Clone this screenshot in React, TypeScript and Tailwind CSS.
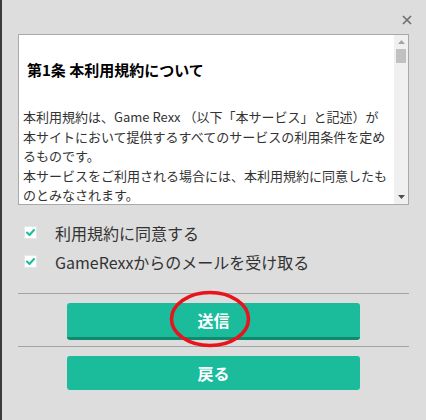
import React from "react";

function Check() {
  return (
    <div className="w-[13px] h-[13px] shrink-0 bg-white border border-[#e6e6e6] flex items-center justify-center">
      <svg width="11" height="11" viewBox="0 0 11 11">
        <path d="M2 5.5 L4.5 8 L9 3" fill="none" stroke="#1abc9c" strokeWidth="2" strokeLinecap="round" strokeLinejoin="round" />
      </svg>
    </div>
  );
}

export default function App() {
  return (
    <div
      className="relative w-[426px] h-[420px] bg-[#dddddd] flex overflow-hidden"
      style={{ fontFamily: '"Noto Sans CJK JP", "Noto Sans", sans-serif' }}
    >
      <div className="w-[2px] shrink-0 bg-[#3a3a3a]" />
      <div className="flex-1 flex flex-col pl-4 pr-[17px]">
        <div className="h-[34px] flex justify-end items-start">
          <svg className="mt-[15px] -mr-[3px]" width="10" height="10" viewBox="0 0 10 10">
            <path d="M1 1 L9 9 M9 1 L1 9" stroke="#707070" strokeWidth="1.7" />
          </svg>
        </div>

        <div className="h-[171px] border border-[#a9a9a9] bg-white flex">
          <div className="flex-1 overflow-hidden pl-[4px] pr-[2px]">
            <h4 className="pl-1 pt-[24px] text-[15px] font-bold leading-[22px] text-black whitespace-nowrap">
              第1条 本利用規約について
            </h4>
            <p className="mt-[26px] text-[13px] leading-[19.5px] text-[#333333] whitespace-nowrap">
              本利用規約は、Game Rexx （以下「本サービス」と記述）が
              <br />
              本サイトにおいて提供するすべてのサービスの利用条件を定め
              <br />
              るものです。
              <br />
              本サービスをご利用される場合には、本利用規約に同意したも
              <br />
              のとみなされます。
            </p>
          </div>
          <div className="w-[14px] shrink-0 bg-[#f0f0f0] flex flex-col items-center">
            <div className="h-[14px] flex items-center justify-center">
              <svg width="7" height="4" viewBox="0 0 7 4">
                <path d="M0 4 L3.5 0 L7 4 Z" fill="#a3a3a3" />
              </svg>
            </div>
            <div className="w-[10px] h-[14px] bg-[#c1c1c1]" />
            <div className="flex-1" />
            <div className="h-[14px] flex items-center justify-center">
              <svg width="7" height="4" viewBox="0 0 7 4">
                <path d="M0 0 L7 0 L3.5 4 Z" fill="#505050" />
              </svg>
            </div>
          </div>
        </div>

        <div className="mt-[13px] flex flex-col">
          <div className="h-[29px] flex items-center ml-[6px] gap-[18px]">
            <Check />
            <span className="text-[16px] leading-[20px] text-[#333333]">利用規約に同意する</span>
          </div>
          <div className="h-[29px] flex items-center ml-[6px] gap-[18px]">
            <Check />
            <span className="text-[16px] leading-[20px] text-[#333333]">GameRexxからのメールを受け取る</span>
          </div>
        </div>

        <div className="mt-[17px] h-px bg-[#a3a3a3]" />

        <button className="mt-[9px] mx-auto w-[293px] h-[37px] bg-[#1abc9c] border-b-[3px] border-[#11896f] rounded-[3px] text-white text-[16px] font-bold flex items-center justify-center">
          送信
        </button>

        <div className="mt-[6px] h-px bg-[#a3a3a3]" />

        <button className="mt-[9px] mx-auto w-[293px] h-[34px] bg-[#1abc9c] rounded-[3px] text-white text-[16px] font-bold flex items-center justify-center">
          戻る
        </button>
      </div>

      <svg className="absolute left-[169px] top-[290px]" width="82" height="58" viewBox="0 0 82 58">
        <ellipse cx="41" cy="29" rx="38.5" ry="26.5" fill="none" stroke="#e8141b" strokeWidth="3.5" />
      </svg>
    </div>
  );
}
